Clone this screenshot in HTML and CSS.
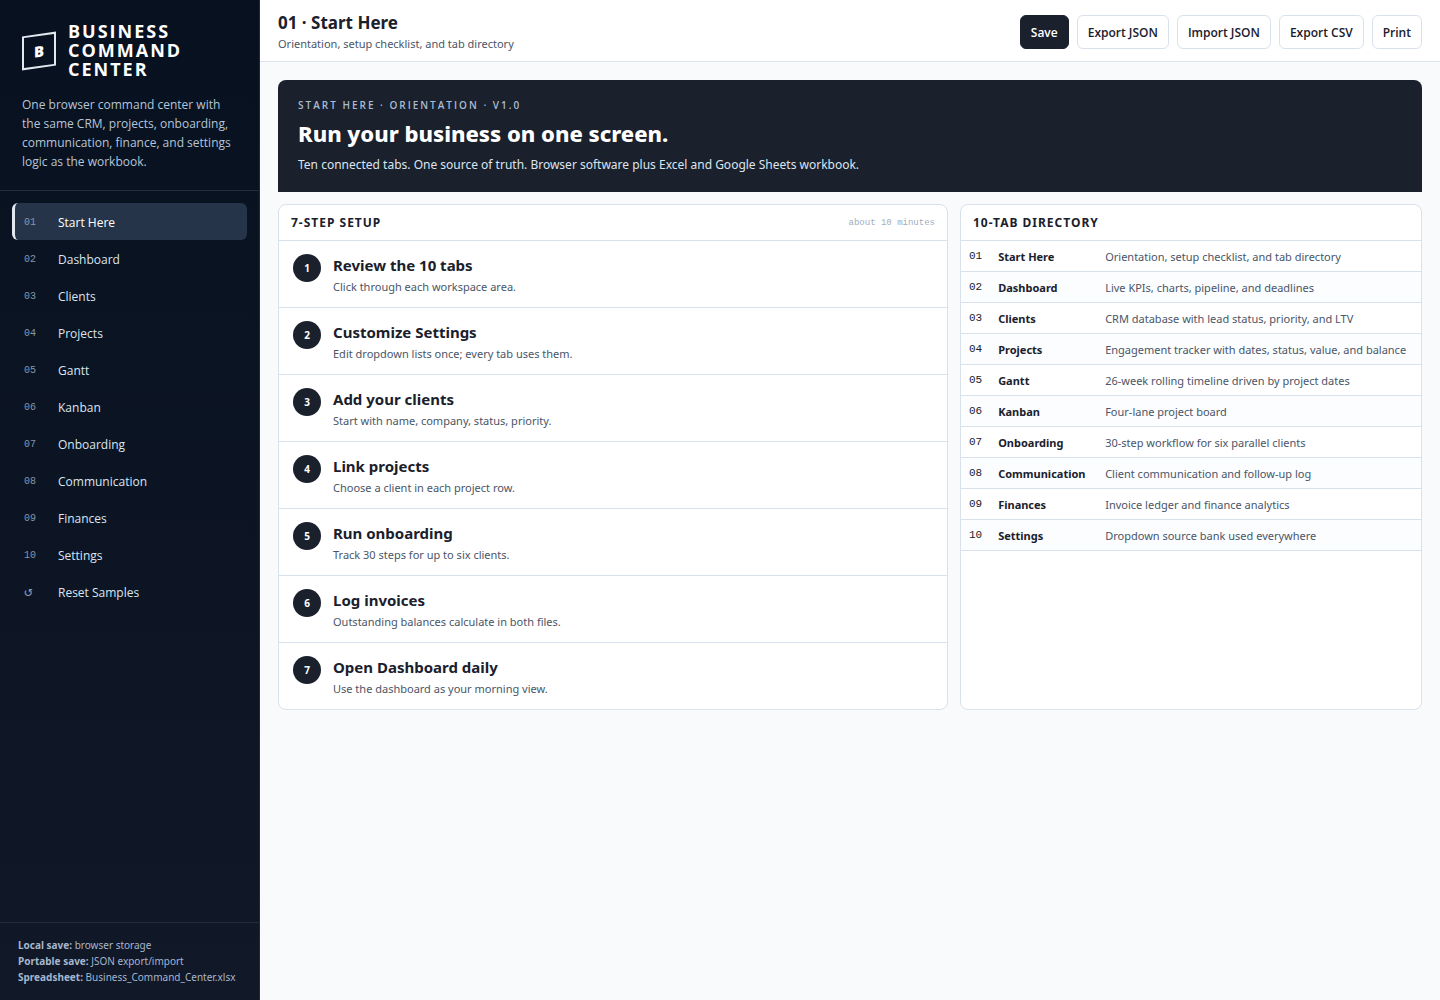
FILE: index.html
```html
<!DOCTYPE html>
<html lang="en">
<head>
<meta charset="utf-8">
<meta name="viewport" content="width=device-width, initial-scale=1">
<title>Business Command Center</title>
<link rel="stylesheet" href="styles.css">
</head>
<body>
<div class="app">
  <aside class="sidebar">
    <div class="brand">
      <div class="brand-row">
        <div class="logo"><span>B</span></div>
        <div class="brand-name">Business Command Center</div>
      </div>
      <p class="brand-text">One browser command center with<br>the same CRM, projects, onboarding,<br>communication, finance, and settings<br>logic as the workbook.</p>
    </div>
    <nav class="nav">
      <button class="nav-item active" type="button"><span class="num">01</span><span>Start Here</span></button>
      <button class="nav-item" type="button"><span class="num">02</span><span>Dashboard</span></button>
      <button class="nav-item" type="button"><span class="num">03</span><span>Clients</span></button>
      <button class="nav-item" type="button"><span class="num">04</span><span>Projects</span></button>
      <button class="nav-item" type="button"><span class="num">05</span><span>Gantt</span></button>
      <button class="nav-item" type="button"><span class="num">06</span><span>Kanban</span></button>
      <button class="nav-item" type="button"><span class="num">07</span><span>Onboarding</span></button>
      <button class="nav-item" type="button"><span class="num">08</span><span>Communication</span></button>
      <button class="nav-item" type="button"><span class="num">09</span><span>Finances</span></button>
      <button class="nav-item" type="button"><span class="num">10</span><span>Settings</span></button>
      <button class="nav-item" type="button"><span class="num reset">↺</span><span>Reset Samples</span></button>
    </nav>
    <div class="side-foot">
      <div><b>Local save:</b> browser storage</div>
      <div><b>Portable save:</b> JSON export/import</div>
      <div><b>Spreadsheet:</b> Business_Command_Center.xlsx</div>
    </div>
  </aside>
  <main class="main">
    <header class="topbar">
      <div>
        <h1 class="page-title">01 · Start Here</h1>
        <p class="page-sub">Orientation, setup checklist, and tab directory</p>
      </div>
      <div class="actions">
        <button class="btn primary" type="button">Save</button>
        <button class="btn" type="button">Export JSON</button>
        <button class="btn" type="button">Import JSON</button>
        <button class="btn" type="button">Export CSV</button>
        <button class="btn" type="button">Print</button>
      </div>
    </header>
    <div class="content">
      <section class="hero">
        <div class="eyebrow">Start Here · Orientation · v1.0</div>
        <h2 class="hero-title">Run your business on one screen.</h2>
        <p class="hero-text">Ten connected tabs. One source of truth. Browser software plus Excel and Google Sheets workbook.</p>
      </section>
      <div class="grid">
        <section class="panel">
          <div class="panel-head"><h3>7-Step Setup</h3><span class="hint">about 10 minutes</span></div>
          <ol class="steps">
            <li class="step"><span class="dot">1</span><div><h4>Review the 10 tabs</h4><p>Click through each workspace area.</p></div></li>
            <li class="step"><span class="dot">2</span><div><h4>Customize Settings</h4><p>Edit dropdown lists once; every tab uses them.</p></div></li>
            <li class="step"><span class="dot">3</span><div><h4>Add your clients</h4><p>Start with name, company, status, priority.</p></div></li>
            <li class="step"><span class="dot">4</span><div><h4>Link projects</h4><p>Choose a client in each project row.</p></div></li>
            <li class="step"><span class="dot">5</span><div><h4>Run onboarding</h4><p>Track 30 steps for up to six clients.</p></div></li>
            <li class="step"><span class="dot">6</span><div><h4>Log invoices</h4><p>Outstanding balances calculate in both files.</p></div></li>
            <li class="step"><span class="dot">7</span><div><h4>Open Dashboard daily</h4><p>Use the dashboard as your morning view.</p></div></li>
          </ol>
        </section>
        <section class="panel">
          <div class="panel-head"><h3>10-Tab Directory</h3></div>
          <table class="directory">
            <tbody>
              <tr><td class="code">01</td><th scope="row">Start Here</th><td>Orientation, setup checklist, and tab directory</td></tr>
              <tr><td class="code">02</td><th scope="row">Dashboard</th><td>Live KPIs, charts, pipeline, and deadlines</td></tr>
              <tr><td class="code">03</td><th scope="row">Clients</th><td>CRM database with lead status, priority, and LTV</td></tr>
              <tr><td class="code">04</td><th scope="row">Projects</th><td>Engagement tracker with dates, status, value, and balance</td></tr>
              <tr><td class="code">05</td><th scope="row">Gantt</th><td>26-week rolling timeline driven by project dates</td></tr>
              <tr><td class="code">06</td><th scope="row">Kanban</th><td>Four-lane project board</td></tr>
              <tr><td class="code">07</td><th scope="row">Onboarding</th><td>30-step workflow for six parallel clients</td></tr>
              <tr><td class="code">08</td><th scope="row">Communication</th><td>Client communication and follow-up log</td></tr>
              <tr><td class="code">09</td><th scope="row">Finances</th><td>Invoice ledger and finance analytics</td></tr>
              <tr><td class="code">10</td><th scope="row">Settings</th><td>Dropdown source bank used everywhere</td></tr>
            </tbody>
          </table>
        </section>
      </div>
    </div>
  </main>
</div>
</body>
</html>
```
FILE: styles.css
```css
:root {
  --ink: #1a202c;
  --line: #d9e2ec;
  --muted: #4a5568;
  --mono: "Liberation Mono", "DejaVu Sans Mono", monospace;
}
* { box-sizing: border-box; }
body {
  margin: 0;
  background: #f8fafc;
  color: var(--ink);
  font: 12px/19px "Noto Sans", "Open Sans", sans-serif;
}
h1, h2, h3, h4, p, ol { margin: 0; padding: 0; }
button { font-family: inherit; cursor: pointer; }

.app { display: grid; grid-template-columns: 260px minmax(0, 1fr); min-height: 100vh; }

.sidebar {
  display: flex;
  flex-direction: column;
  background: linear-gradient(180deg, #07111f, #111827);
  border-right: 1px solid #1f2a3a;
  color: #e2e8f0;
  font-family: "Open Sans", "Noto Sans", sans-serif;
}
.brand { padding: 22px 22px 19px; border-bottom: 1px solid #232c3a; }
.brand-row { display: flex; align-items: center; gap: 12px; }
.logo {
  display: grid;
  place-items: center;
  flex: none;
  width: 34px;
  height: 34px;
  border: 2px solid #e2e8f0;
  transform: skewY(-8deg);
  color: #fff;
  font-size: 15px;
  font-weight: 800;
}
.brand-name {
  color: #fff;
  font-size: 18px;
  line-height: 19px;
  font-weight: 700;
  letter-spacing: 2px;
  text-transform: uppercase;
}
.brand-text { margin-top: 16px; color: #b6c5d8; white-space: nowrap; }
.nav { display: flex; flex-direction: column; padding: 12px; flex: 1; }
.nav-item {
  display: grid;
  grid-template-columns: 24px 1fr;
  gap: 10px;
  align-items: center;
  height: 37px;
  padding: 1px 9px 0;
  border: 0;
  border-left: 3px solid transparent;
  border-radius: 6px;
  background: transparent;
  color: #dbe5f1;
  font-size: 12px;
  text-align: left;
}
.nav-item.active { background: #263449; border-left-color: #e2e8f0; color: #fff; }
.num { color: #8496ad; font: 10px/19px var(--mono); }
.num.reset { font-size: 14px; }
.side-foot {
  padding: 14px 0 15px 18px;
  border-top: 1px solid #232c3a;
  color: #a5b6cd;
  font: 10px/16px "Noto Sans", "Open Sans", sans-serif;
  white-space: nowrap;
}

.topbar {
  display: flex;
  align-items: center;
  justify-content: space-between;
  padding: 11px 18px 8px;
  background: #fff;
  border-bottom: 1px solid var(--line);
}
.page-title { font-size: 17px; line-height: 24px; font-weight: 700; }
.page-sub { color: var(--muted); font-size: 11px; line-height: 18px; }
.actions { display: flex; gap: 8px; }
.btn {
  height: 34px;
  padding: 0 10px;
  border: 1px solid var(--line);
  border-radius: 6px;
  background: #fff;
  color: var(--ink);
  font: 600 12px/19px "Open Sans", "Noto Sans", sans-serif;
}
.btn.primary { background: var(--ink); border-color: var(--ink); color: #fff; }

.content { display: grid; gap: 12px; padding: 18px; }
.hero {
  padding: 18px 20px;
  border-radius: 8px 8px 0 0;
  background: var(--ink);
  color: #fff;
}
.eyebrow {
  color: #a9bcd3;
  font: 600 10px/14px "Open Sans", "Noto Sans", sans-serif;
  letter-spacing: 2px;
  text-transform: uppercase;
}
.hero-title { margin: 5px 0; font-size: 22px; line-height: 33px; font-weight: 800; }
.hero-text { color: #dbe5f1; }

.grid { display: grid; grid-template-columns: minmax(0, 145fr) minmax(0, 100fr); gap: 12px; }
.panel { background: #fff; border: 1px solid var(--line); border-radius: 8px; overflow: hidden; }
.panel-head {
  display: flex;
  align-items: center;
  justify-content: space-between;
  height: 36px;
  padding: 0 12px;
  border-bottom: 1px solid var(--line);
}
.panel-head h3 { font-size: 12px; font-weight: 700; letter-spacing: 1px; text-transform: uppercase; }
.hint { color: #a0aec0; font: 9px/16px var(--mono); }
.steps { list-style: none; }
.step { display: flex; gap: 12px; padding: 13px 14px 11px; border-bottom: 1px solid var(--line); }
.step:last-child { border-bottom: 0; }
.dot {
  display: grid;
  place-items: center;
  width: 28px;
  height: 28px;
  border-radius: 50%;
  background: var(--ink);
  color: #fff;
  font-size: 10px;
  font-weight: 700;
}
.step h4 { font-size: 15px; line-height: 23px; font-weight: 700; }
.step p { margin-top: 1px; color: var(--muted); font-size: 11px; line-height: 18px; }

.directory { width: 100%; border-spacing: 0; font-size: 11px; line-height: 18px; }
.directory td, .directory th {
  height: 31px;
  padding: 2px 8px 0;
  border-bottom: 1px solid var(--line);
  text-align: left;
  white-space: nowrap;
}
.directory td { color: var(--muted); }
.directory th { width: 107px; font-weight: 700; }
.directory .code { width: 29px; padding-top: 0; color: var(--ink); font-family: var(--mono); }
.directory tr:nth-child(even) { background: #fbfdff; }
```
